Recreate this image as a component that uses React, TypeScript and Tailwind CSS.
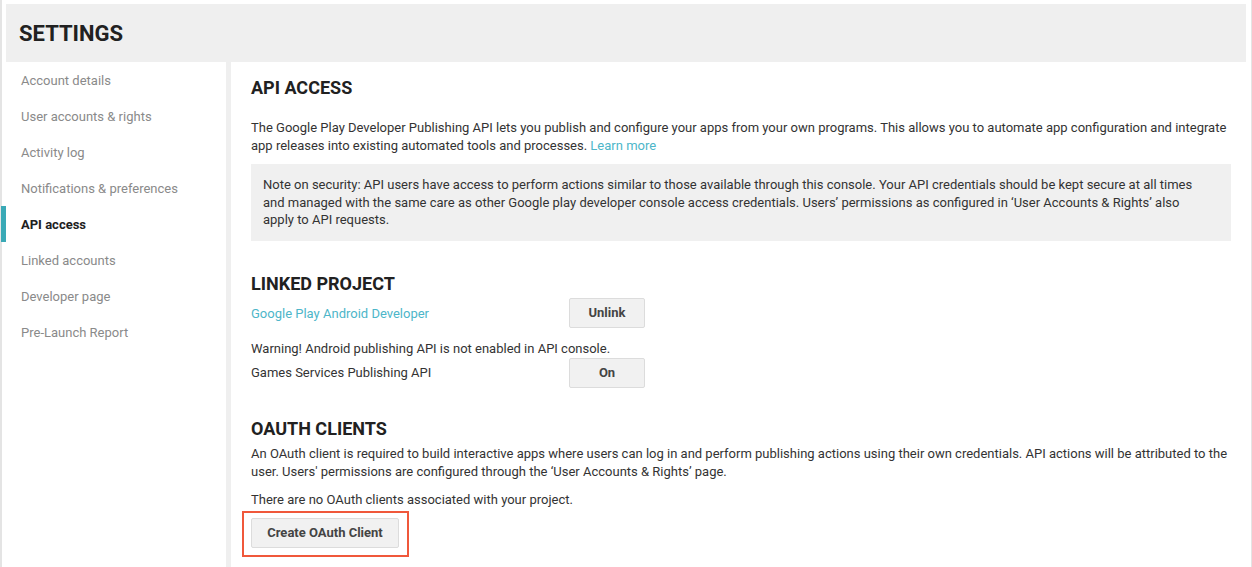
import React from "react";

const navItems = [
  "Account details",
  "User accounts & rights",
  "Activity log",
  "Notifications & preferences",
  "API access",
  "Linked accounts",
  "Developer page",
  "Pre-Launch Report",
];

function GrayButton({ label, className = "" }: { label: string; className?: string }) {
  return (
    <button
      className={`h-[30px] rounded-[2px] border border-[#dcdcdc] bg-[#f1f1f1] text-[13px] font-bold text-[#444] ${className}`}
    >
      {label}
    </button>
  );
}

export default function App() {
  const active = "API access";

  return (
    <div
      className="min-h-[567px] border-l-2 border-r border-[#e4e4e4] bg-white pl-1 pr-[5px] pt-1 text-[13px] text-[#333]"
      style={{ fontFamily: "Roboto, 'Liberation Sans', Arial, sans-serif" }}
    >
      {/* Page header */}
      <div className="flex h-[58px] items-center bg-[#efefef] pl-[13px]">
        <h1 className="text-[22px] font-bold text-[#212121]">SETTINGS</h1>
      </div>

      <div className="flex min-h-[505px]">
        {/* Sidebar */}
        <nav className="w-[220px] shrink-0 bg-white">
          {navItems.map((item) => (
            <div key={item} className="relative flex h-9 items-center pl-[15px] pt-px">
              {item === active && (
                <span className="absolute -left-[5px] top-0 h-9 w-[5px] bg-[#3aa9b6]"></span>
              )}
              <span
                className={
                  item === active
                    ? "font-bold text-[#212121]"
                    : "text-[#8a8a8a]"
                }
              >
                {item}
              </span>
            </div>
          ))}
        </nav>

        <div className="w-[5px] shrink-0 bg-[#efefef]"></div>

        {/* Main content */}
        <main className="flex-1 pl-5 pr-[15px] pt-[14px]">
          <h2 className="text-[18px] font-bold leading-6 text-[#212121]">API ACCESS</h2>
          <p className="mt-[19px] leading-[18px]">
            The Google Play Developer Publishing API lets you publish and configure your apps from your own
            programs. This allows you to automate app configuration and integrate app releases into existing
            automated tools and processes.{" "}
            <a className="text-[#4db6c9]">Learn more</a>
          </p>
          <div className="mt-[9px] bg-[#f0f0f0] py-3 pl-3 pr-5 leading-[17.5px]">
            Note on security: API users have access to perform actions similar to those available through this
            console. Your API credentials should be kept secure at all times and managed with the same care as
            other Google play developer console access credentials. Users’ permissions as configured in ‘User
            Accounts &amp; Rights’ also apply to API requests.
          </div>

          <h2 className="mt-[31px] text-[18px] font-bold leading-6 text-[#212121]">LINKED PROJECT</h2>
          <div className="mt-[2px] flex h-[30px] items-center">
            <a className="w-[318px] pt-[3px] text-[#4db6c9]">Google Play Android Developer</a>
            <GrayButton label="Unlink" className="w-[76px]" />
          </div>
          <p className="mt-[11px] pt-px leading-[18px]">Warning! Android publishing API is not enabled in API console.</p>
          <div className="flex h-[30px] items-center">
            <span className="w-[318px] pt-px">Games Services Publishing API</span>
            <GrayButton label="On" className="w-[76px]" />
          </div>

          <h2 className="mt-[29px] text-[18px] font-bold leading-6 text-[#212121]">OAUTH CLIENTS</h2>
          <p className="mt-1 leading-[18px]">
            An OAuth client is required to build interactive apps where users can log in and perform publishing
            actions using their own credentials. API actions will be attributed to the user. Users' permissions
            are configured through the ‘User Accounts &amp; Rights’ page.
          </p>
          <p className="mt-[10px] leading-[18px]">There are no OAuth clients associated with your project.</p>
          <div className="relative mt-[9px] inline-block">
            <GrayButton label="Create OAuth Client" className="w-[148px]" />
            <span className="pointer-events-none absolute -bottom-[9px] -left-[9px] -right-[10px] -top-[7px] border-2 border-[#f0583b]"></span>
          </div>
        </main>
      </div>
    </div>
  );
}
